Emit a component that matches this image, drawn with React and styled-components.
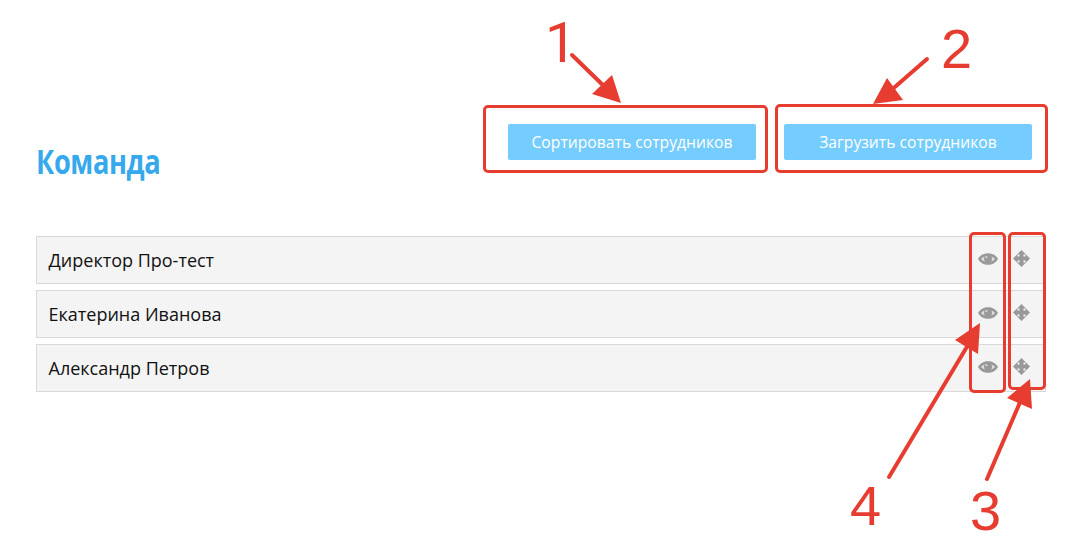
import React from "react";
import styled, { createGlobalStyle } from "styled-components";

const GlobalStyle = createGlobalStyle`
    html, body {
        margin: 0;
        padding: 0;
        background: #fff;
        font-family: "Open Sans", "Liberation Sans", sans-serif;
    }
`

const Page = styled.div`
    position: relative;
    width: 1086px;
    height: 553px;
    overflow: hidden;
    box-sizing: border-box;
    padding: 124px 40px 0 36px;
`
const Header = styled.div`
    display: flex;
    justify-content: space-between;
    align-items: flex-start;
    height: 112px;
`
const Title = styled.h1`
    margin: 0;
    padding-top: 15px;
    font-size: 34px;
    line-height: 44px;
    font-weight: 700;
    color: #36a9ec;
    letter-spacing: -0.5px;
    transform: scaleX(0.8);
    transform-origin: left center;
`
const Buttons = styled.div`
    display: flex;
    gap: 28px;
    padding-right: 14px;
`
const Button = styled.button`
    width: 248px;
    height: 36px;
    padding: 0;
    border: none;
    border-radius: 2px;
    background: #75ccff;
    color: #fff;
    font-family: inherit;
    font-size: 15.7px;
`
const List = styled.div`
    display: flex;
    flex-direction: column;
    gap: 6px;
`
const Row = styled.div`
    display: flex;
    align-items: center;
    height: 48px;
    box-sizing: border-box;
    padding: 0 15px 0 11.5px;
    border: 1px solid #d9d9d9;
    background: #f4f4f4;
    color: #111;
    font-size: 18px;
`
const Name = styled.span`
    flex: 1;
`
const Actions = styled.div`
    display: flex;
    align-items: center;
    gap: 15px;
    margin-bottom: 2px;
`
const Eye = styled.svg`
    display: block;
    width: 20px;
    height: 14px;
`
const Move = styled.svg`
    display: block;
    width: 17px;
    height: 17px;
    margin-bottom: 1px;
`
const Frame = styled.div`
    position: absolute;
    left: ${(p) => p.$x}px;
    top: ${(p) => p.$y}px;
    width: ${(p) => p.$w}px;
    height: ${(p) => p.$h}px;
    box-sizing: border-box;
    border: 3px solid #e73c30;
    border-radius: 5px;
`
const Digit = styled.span`
    position: absolute;
    left: ${(p) => p.$x}px;
    top: ${(p) => p.$y}px;
    font-family: ${(p) => (p.$plain ? "Roboto" : '"Liberation Sans"')}, Arial, sans-serif;
    font-size: 56px;
    line-height: 1;
    color: #e73c30;
`
const Overlay = styled.svg`
    position: absolute;
    left: 0;
    top: 0;
    pointer-events: none;
`

const people = ["Директор Про-тест", "Екатерина Иванова", "Александр Петров"]

const arrows = [
    { line: "572,55 609,91", head: "621,103 612,75 592,94" },
    { line: "927,59 888,93", head: "873,104 887,78 903,100" },
    { line: "889,477 968,345", head: "980,323 955,340 978,354" },
    { line: "987,479 1021,400", head: "1030,379 1007,398 1032,409" },
]

const EyeIcon = () => (
    <Eye viewBox="0 0 20 14">
        <path d="M0 7C4 -.8 16 -.8 20 7 16 14.8 4 14.8 0 7Z" fill="#999" />
        <path d="M3 7C6 3 14 3 17 7 14 11 6 11 3 7Z" fill="#ddd" />
        <circle cx="10" cy="6.7" r="4" fill="#999" />
        <circle cx="8.4" cy="5.2" r="1.1" fill="#d4d4d4" />
    </Eye>
)

const MoveIcon = () => (
    <Move viewBox="0 0 17 17">
        <path
            d="M8.5 0 13 4.5H10.5V6.5H12.5V4L17 8.5 12.5 13V10.5H10.5V12.5H13L8.5 17 4 12.5H6.5V10.5H4.5V13L0 8.5 4.5 4V6.5H6.5V4.5H4Z"
            fill="#999"
        />
    </Move>
)

const App = () => {
    return (
        <>
            <GlobalStyle />
            <Page>
                <Header>
                    <Title>Команда</Title>
                    <Buttons>
                        <Button>Сортировать сотрудников</Button>
                        <Button>Загрузить сотрудников</Button>
                    </Buttons>
                </Header>
                <List>
                    {people.map((name) => (
                        <Row key={name}>
                            <Name>{name}</Name>
                            <Actions>
                                <EyeIcon />
                                <MoveIcon />
                            </Actions>
                        </Row>
                    ))}
                </List>

                <Frame $x={483} $y={105} $w={285} $h={68} />
                <Frame $x={775} $y={104} $w={273} $h={69} />
                <Frame $x={969} $y={232} $w={37} $h={161} />
                <Frame $x={1008} $y={232} $w={38} $h={158} />
                <Overlay width="1086" height="553">
                    {arrows.map((a) => (
                        <g key={a.line} fill="#e73c30">
                            <polyline points={a.line} stroke="#e73c30" strokeWidth="4" strokeLinecap="round" fill="none" />
                            <polygon points={a.head} />
                        </g>
                    ))}
                </Overlay>
                <Digit $x={545} $y={15} $plain>1</Digit>
                <Digit $x={941} $y={21}>2</Digit>
                <Digit $x={850} $y={478}>4</Digit>
                <Digit $x={970} $y={483}>3</Digit>
            </Page>
        </>
    )
}

export default App;
